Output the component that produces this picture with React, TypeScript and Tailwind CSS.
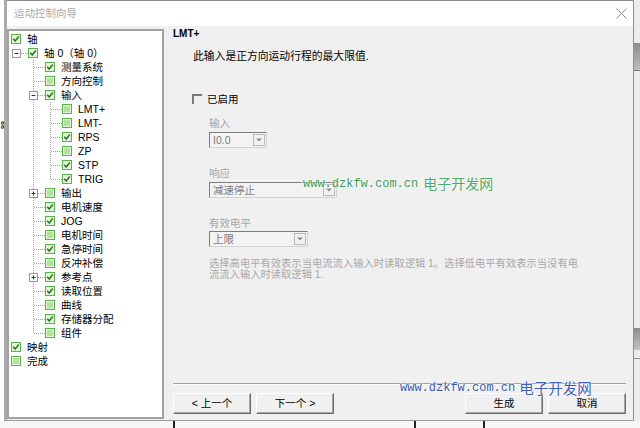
import React from 'react';

type TreeNode = {
  label: string;
  level: number;
  checked: boolean;
  exp?: '-' | '+';
  last?: boolean;
};

const nodes: TreeNode[] = [
  { label: '轴', level: 0, checked: true },
  { label: '轴 0（轴 0）', level: 1, checked: true, exp: '-' },
  { label: '测量系统', level: 2, checked: true },
  { label: '方向控制', level: 2, checked: false },
  { label: '输入', level: 2, checked: true, exp: '-' },
  { label: 'LMT+', level: 3, checked: false },
  { label: 'LMT-', level: 3, checked: false },
  { label: 'RPS', level: 3, checked: true },
  { label: 'ZP', level: 3, checked: false },
  { label: 'STP', level: 3, checked: true },
  { label: 'TRIG', level: 3, checked: true, last: true },
  { label: '输出', level: 2, checked: false, exp: '+' },
  { label: '电机速度', level: 2, checked: true },
  { label: 'JOG', level: 2, checked: true },
  { label: '电机时间', level: 2, checked: false },
  { label: '急停时间', level: 2, checked: true },
  { label: '反冲补偿', level: 2, checked: false },
  { label: '参考点', level: 2, checked: true, exp: '+' },
  { label: '读取位置', level: 2, checked: true },
  { label: '曲线', level: 2, checked: false },
  { label: '存储器分配', level: 2, checked: true },
  { label: '组件', level: 2, checked: false, last: true },
  { label: '映射', level: 0, checked: true },
  { label: '完成', level: 0, checked: false },
];

const DOT = '#a3a3a3';

function Guide({ vline }: { vline?: boolean }) {
  return (
    <svg width="17" height="14" className="shrink-0">
      {vline && <line x1="5.5" y1="0" x2="5.5" y2="14" stroke={DOT} strokeDasharray="1 1" />}
    </svg>
  );
}

function Connector({ last, exp, noVert }: { last?: boolean; exp?: '-' | '+'; noVert?: boolean }) {
  return (
    <svg width="17" height="14" className="shrink-0">
      {!noVert && (
        <line x1="5.5" y1="0" x2="5.5" y2={last ? 7.5 : 14} stroke={DOT} strokeDasharray="1 1" />
      )}
      <line x1="6" y1="7.5" x2="17" y2="7.5" stroke={DOT} strokeDasharray="1 1" />
      {exp && (
        <g>
          <rect x="1.5" y="3.5" width="8" height="8" fill="#fff" stroke="#9a9a9a" />
          <line x1="3.5" y1="7.5" x2="7.5" y2="7.5" stroke="#3a3a3a" />
          {exp === '+' && <line x1="5.5" y1="5.5" x2="5.5" y2="9.5" stroke="#3a3a3a" />}
        </g>
      )}
    </svg>
  );
}

function GreenCheck({ checked }: { checked: boolean }) {
  return (
    <svg width="10" height="10" className="shrink-0">
      <rect x="0.5" y="0.5" width="9" height="9" fill="#e4f6dc" stroke="#55b348" />
      {checked ? (
        <path d="M2.2 4.8 L4.2 7 L7.8 2.6" fill="none" stroke="#2c7a22" strokeWidth="1.6" />
      ) : (
        <rect x="2" y="2" width="6" height="6" fill="#b2e29e" />
      )}
    </svg>
  );
}

function TreeRow({ node }: { node: TreeNode }) {
  const prefix = [];
  for (let i = 0; i < node.level - 1; i++) {
    prefix.push(<Guide key={i} vline={i >= 1} />);
  }
  return (
    <div className="flex items-center h-[14px] whitespace-nowrap">
      {prefix}
      {node.level >= 1 && <Connector last={node.last} exp={node.exp} noVert={node.level === 1} />}
      <GreenCheck checked={node.checked} />
      <span className="ml-[6px] text-[10.5px] leading-[14px] text-black">{node.label}</span>
    </div>
  );
}

function Select({ width, value }: { width: string; value: string }) {
  return (
    <div
      className={`${width} h-[16px] flex items-center justify-between border border-t-[#7d7d7d] border-l-[#7d7d7d] border-r-[#d2d2d2] border-b-[#d2d2d2] bg-[#f3f3f3]`}
    >
      <span className="pl-[3px] text-[10.5px] leading-[14px] text-[#7a7a7a]">{value}</span>
      <div className="mr-[1px] w-[12px] h-[12px] border border-[#b9b9b9] bg-[#f2f2f2] flex items-center justify-center">
        <svg width="6" height="4">
          <path d="M0 0.5 L6 0.5 L3 3.5 Z" fill="#8a8a8a" />
        </svg>
      </div>
    </div>
  );
}

function Button({ label }: { label: string }) {
  return (
    <div className="w-[78px] h-[21px] flex items-center justify-center border border-t-white border-l-white border-r-[#6b6b6b] border-b-[#6b6b6b] shadow-[inset_-1px_-1px_0_#a6a6a6] bg-[#f0f0f0] text-[10.5px] text-black">
      {label}
    </div>
  );
}

export default function App() {
  return (
    <div className="w-[640px] h-[428px] flex flex-col bg-white overflow-hidden relative font-['Liberation_Sans','Noto_Sans_CJK_SC',sans-serif]">
      <div className="flex h-[421px]">
        {/* left edge outside window */}
        <div className="w-[4px] bg-white flex items-start">
          <span className="mt-[121px] text-[7px] leading-[7px] font-bold text-[#222] [writing-mode:vertical-rl]">88</span>
        </div>

        {/* window */}
        <div className="w-[630px] flex flex-col border-l-[3px] border-l-[#a9a9a9] border-r border-r-[#8f8f8f] border-b border-b-[#9a9a9a]">
          {/* title bar */}
          <div className="h-[26px] bg-white border-t border-t-[#8a8a8a] flex items-center justify-between">
            <span className="pl-[7px] text-[10.5px] text-[#a9a9a9]">运动控制向导</span>
            <svg width="11" height="11" className="mr-[6px]">
              <path d="M0.5 0.5 L10.5 10.5 M10.5 0.5 L0.5 10.5" stroke="#8a8a8a" strokeWidth="1" />
            </svg>
          </div>

          {/* body */}
          <div className="flex-1 flex bg-[#f0f0f0]">
            {/* tree */}
            <div className="mt-[3px] w-[157px] h-[390px] border-2 border-[#a2a2a2] bg-white pt-[1px] pl-[2px] overflow-hidden">
              {nodes.map((n, i) => (
                <TreeRow key={i} node={n} />
              ))}
            </div>

            {/* right pane */}
            <div className="flex-1 flex flex-col pl-[9px] pr-[7px]">
              <div className="mt-[2px] h-[12px] leading-[12px] text-[10px] font-bold text-black">LMT+</div>
              <div className="mt-[10px] ml-[20px] h-[12px] leading-[12px] text-[10.8px] text-black">
                此输入是正方向运动行程的最大限值.
              </div>

              <div className="mt-[31px] ml-[19px] h-[12px] flex items-center">
                <div className="w-[10px] h-[10px] border-t-2 border-l-2 border-t-[#7a7a7a] border-l-[#7a7a7a] bg-[#f0f0f0]" />
                <span className="ml-[5px] text-[10.5px] leading-[12px] text-black">已启用</span>
              </div>

              <div className="ml-[36px] flex flex-col">
                <div className="mt-[12px] h-[12px] leading-[12px] text-[10.5px] text-[#a6a6a6]">输入</div>
                <div className="mt-[3px]">
                  <Select width="w-[58px]" value="I0.0" />
                </div>

                <div className="mt-[19px] h-[12px] leading-[12px] text-[10.5px] text-[#a6a6a6]">响应</div>
                <div className="mt-[3px]">
                  <Select width="w-[128px]" value="减速停止" />
                </div>

                <div className="mt-[19px] h-[12px] leading-[12px] text-[10.5px] text-[#a6a6a6]">有效电平</div>
                <div className="mt-[2px]">
                  <Select width="w-[99px]" value="上限" />
                </div>

                <div className="mt-[12px] text-[10.3px] leading-[10.5px] text-[#a8a8a8] whitespace-nowrap">
                  <div>选择高电平有效表示当电流流入输入时读取逻辑 1。选择低电平有效表示当没有电</div>
                  <div>流流入输入时读取逻辑 1.</div>
                </div>
              </div>

              <div className="mt-auto h-[2px] border-t border-t-[#a0a0a0] border-b border-b-white" />

              <div className="mt-[8px] mb-[6px] flex justify-between">
                <div className="flex gap-[5px]">
                  <Button label="< 上一个" />
                  <Button label="下一个 >" />
                </div>
                <div className="flex gap-[5px]">
                  <Button label="生成" />
                  <Button label="取消" />
                </div>
              </div>
            </div>
          </div>
        </div>

        {/* right edge outside window */}
        <div className="flex-1 flex flex-col bg-[#ececec]">
          <div className="h-[43px]" />
          <div className="h-[27px] bg-gradient-to-b from-[#8c8c8c] to-[#bdbdbd]" />
          <div className="h-[1px] bg-[#7a7a7a]" />
          <div className="h-[257px]" />
          <div className="h-[22px] bg-gradient-to-b from-[#8c8c8c] to-[#c4c4c4]" />
          <div className="h-[8px]" />
          <div className="h-[1px] bg-[#8a8a8a]" />
        </div>
      </div>

      {/* strip below the window */}
      <div className="flex-1 flex bg-[#f6f6f6]">
        <div className="w-[173px]" />
        <div className="w-[2px] bg-[#222]" />
        <div className="w-[239px]" />
        <div className="w-[2px] bg-[#222]" />
        <div className="w-[67px]" />
        <div className="w-[2px] bg-[#222]" />
      </div>

      {/* watermarks */}
      <div className="absolute left-[303px] top-[173px] flex items-center [text-shadow:0_0_2px_#fff,0_0_3px_#fff]">
        <span className="font-['Liberation_Mono',monospace] text-[12px] text-[#3e9b5c]">www.dzkfw.com.cn</span>
        <span className="ml-[5px] font-['Noto_Sans_CJK_SC',sans-serif] text-[14px] text-[#4fa96a]">电子开发网</span>
      </div>
      <div className="absolute left-[400px] top-[377px] flex items-center [text-shadow:0_0_2px_#fff,0_0_3px_#fff]">
        <span className="font-['Liberation_Mono',monospace] text-[12px] text-[#3a58ae]">www.dzkfw.com.cn</span>
        <span className="ml-[4px] font-['Noto_Sans_CJK_SC',sans-serif] text-[14.5px] text-[#3f5fc2]">电子开发网</span>
      </div>
    </div>
  );
}
